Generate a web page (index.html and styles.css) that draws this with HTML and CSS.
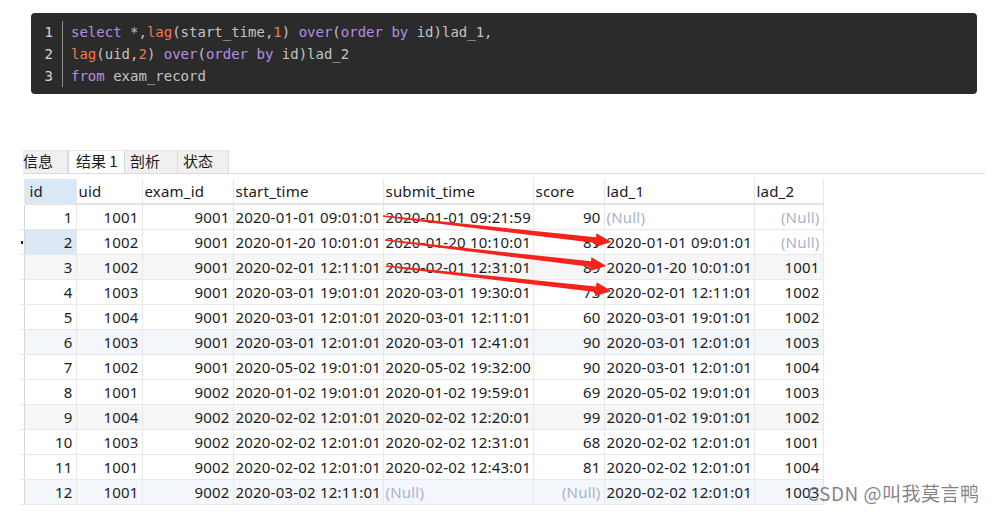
FILE: index.html
```html
<!DOCTYPE html>
<html lang="zh">
<head>
<meta charset="utf-8">
<title>lag</title>
<link rel="stylesheet" href="styles.css">
</head>
<body>
<div class="code">
  <div class="gutter"><div>1</div><div>2</div><div>3</div></div>
  <div class="lines">
    <div class="ln"><span class="kw">select</span> *,<span class="fn">lag</span>(start_time,<span class="num">1</span>) <span class="kw">over</span>(<span class="kw">order</span> <span class="kw">by</span> id)lad_1,</div>
    <div class="ln"><span class="fn">lag</span>(uid,<span class="num">2</span>) <span class="kw">over</span>(<span class="kw">order</span> <span class="kw">by</span> id)lad_2</div>
    <div class="ln"><span class="kw">from</span> exam_record</div>
  </div>
</div>

<div class="result">
  <div class="tabs">
    <div class="tab tab-first">信息</div>
    <div class="tab active">结果 1</div>
    <div class="tab">剖析</div>
    <div class="tab">状态</div>
  </div>
  <table class="grid">
    <colgroup>
      <col class="c-stub"><col class="c-id"><col class="c-uid"><col class="c-exam"><col class="c-dt"><col class="c-dt"><col class="c-score"><col class="c-dt"><col class="c-lad2">
    </colgroup>
    <thead>
      <tr><th class="stub"></th><th class="hid">id</th><th>uid</th><th>exam_id</th><th>start_time</th><th>submit_time</th><th>score</th><th>lad_1</th><th>lad_2</th></tr>
    </thead>
    <tbody>
      <tr><td class="stub"></td><td class="r">1</td><td class="r">1001</td><td class="r">9001</td><td>2020-01-01 09:01:01</td><td>2020-01-01 09:21:59</td><td class="r">90</td><td class="null">(Null)</td><td class="r null">(Null)</td></tr>
      <tr><td class="stub"><span class="mark"></span></td><td class="r cur">2</td><td class="r">1002</td><td class="r">9001</td><td>2020-01-20 10:01:01</td><td>2020-01-20 10:10:01</td><td class="r">89</td><td>2020-01-01 09:01:01</td><td class="r null">(Null)</td></tr>
      <tr class="alt"><td class="stub"></td><td class="r">3</td><td class="r">1002</td><td class="r">9001</td><td>2020-02-01 12:11:01</td><td>2020-02-01 12:31:01</td><td class="r">89</td><td>2020-01-20 10:01:01</td><td class="r">1001</td></tr>
      <tr><td class="stub"></td><td class="r">4</td><td class="r">1003</td><td class="r">9001</td><td>2020-03-01 19:01:01</td><td>2020-03-01 19:30:01</td><td class="r">73</td><td>2020-02-01 12:11:01</td><td class="r">1002</td></tr>
      <tr><td class="stub"></td><td class="r">5</td><td class="r">1004</td><td class="r">9001</td><td>2020-03-01 12:01:01</td><td>2020-03-01 12:11:01</td><td class="r">60</td><td>2020-03-01 19:01:01</td><td class="r">1002</td></tr>
      <tr class="tint"><td class="stub"></td><td class="r">6</td><td class="r">1003</td><td class="r">9001</td><td>2020-03-01 12:01:01</td><td>2020-03-01 12:41:01</td><td class="r">90</td><td>2020-03-01 12:01:01</td><td class="r">1003</td></tr>
      <tr><td class="stub"></td><td class="r">7</td><td class="r">1002</td><td class="r">9001</td><td>2020-05-02 19:01:01</td><td>2020-05-02 19:32:00</td><td class="r">90</td><td>2020-03-01 12:01:01</td><td class="r">1004</td></tr>
      <tr><td class="stub"></td><td class="r">8</td><td class="r">1001</td><td class="r">9002</td><td>2020-01-02 19:01:01</td><td>2020-01-02 19:59:01</td><td class="r">69</td><td>2020-05-02 19:01:01</td><td class="r">1003</td></tr>
      <tr class="alt"><td class="stub"></td><td class="r">9</td><td class="r">1004</td><td class="r">9002</td><td>2020-02-02 12:01:01</td><td>2020-02-02 12:20:01</td><td class="r">99</td><td>2020-01-02 19:01:01</td><td class="r">1002</td></tr>
      <tr><td class="stub"></td><td class="r">10</td><td class="r">1003</td><td class="r">9002</td><td>2020-02-02 12:01:01</td><td>2020-02-02 12:31:01</td><td class="r">68</td><td>2020-02-02 12:01:01</td><td class="r">1001</td></tr>
      <tr><td class="stub"></td><td class="r">11</td><td class="r">1001</td><td class="r">9002</td><td>2020-02-02 12:01:01</td><td>2020-02-02 12:43:01</td><td class="r">81</td><td>2020-02-02 12:01:01</td><td class="r">1004</td></tr>
      <tr class="tint"><td class="stub"></td><td class="r">12</td><td class="r">1001</td><td class="r">9002</td><td>2020-03-02 12:11:01</td><td class="null">(Null)</td><td class="r null">(Null)</td><td>2020-02-02 12:01:01</td><td class="r">1003</td></tr>
    </tbody>
  </table>
</div>

<svg class="arrows" width="993" height="514" viewBox="0 0 993 514" xmlns="http://www.w3.org/2000/svg">
  <g fill="#f5231c">
    <polygon transform="translate(383 216) rotate(6.48)" points="0,-0.7 214,-2.8 214,-7 230,0 214,7 214,2.8 0,0.7"/>
    <polygon transform="translate(385 240) rotate(6.68)" points="0,-0.7 207,-2.8 207,-7 223,0 207,7 207,2.8 0,0.7"/>
    <polygon transform="translate(386 266) rotate(6.31)" points="0,-0.7 211,-2.8 211,-7 227,0 211,7 211,2.8 0,0.7"/>
  </g>
</svg>

<div class="watermark">CSDN @叫我莫言鸭</div>
</body>
</html>
```

FILE: styles.css
```css
html, body {
  margin: 0;
  padding: 0;
}
body {
  position: relative;
  width: 993px;
  height: 514px;
  overflow: hidden;
  background: #ffffff;
  font-family: "Noto Sans", "Noto Sans CJK SC", sans-serif;
  color: #1c1c1c;
}

/* code block */
.code {
  margin: 13px 0 0 31px;
  width: 946px;
  height: 81px;
  box-sizing: border-box;
  padding-top: 8px;
  border-radius: 4px;
  background: #2b2b2b;
  display: flex;
  align-items: flex-start;
  font-family: "DejaVu Sans Mono", "Liberation Mono", monospace;
  font-size: 14px;
  line-height: 22px;
  color: #c3c3c3;
}
.gutter {
  width: 32px;
  box-sizing: border-box;
  padding-right: 9px;
  text-align: right;
  color: #d4d4d4;
  border-right: 1px solid #8c8c8c;
}
.lines {
  padding-left: 8px;
}
.ln {
  white-space: pre;
  height: 22px;
}
.kw { color: #b88ee4; }
.fn { color: #f07a4a; }
.num { color: #f07a4a; }

/* result area */
.result {
  margin-top: 56px;
}
.tabs {
  display: flex;
  margin-left: 23px;
  width: 962px;
  height: 23px;
  border-bottom: 1px solid #dcdcdc;
  font-family: "Noto Sans CJK SC", sans-serif;
  font-size: 15px;
  line-height: 20px;
}
.tab {
  box-sizing: border-box;
  height: 23px;
  padding-left: 5px;
  background: #f0f0f0;
  border-right: 1px solid #dadada;
  border-top: 1px solid #e6e6e6;
  color: #1a1a1a;
}
.tab-first {
  width: 45px;
  padding-left: 0;
}
.tab.active {
  width: 57px;
  padding-left: 7px;
  background: #ffffff;
  border-left: 1px solid #dadada;
}
.tab:nth-child(3) { width: 53px; }
.tab:nth-child(4) { width: 51px; }

.grid {
  margin: 5px 0 0 20px;
  border-collapse: collapse;
  table-layout: fixed;
  width: 803px;
  font-size: 15px;
  letter-spacing: 0.2px;
}
.c-stub { width: 4px; }
.c-id { width: 52px; }
.c-uid { width: 66px; }
.c-exam { width: 91px; }
.c-dt { width: 150px; }
.c-score { width: 71px; }
.c-lad2 { width: 69px; }

.grid th, .grid td {
  padding: 0 0 0 2px;
  height: 24px;
  line-height: 24px;
  border: 1px solid #e8e8e8;
  white-space: nowrap;
  overflow: hidden;
  text-align: left;
  font-weight: normal;
}
.grid th {
  border-top: none;
  border-bottom: 2px solid #e4e4e4;
  color: #1a1a1a;
}
.grid th.hid {
  background: #d9e8f7;
  padding-left: 5px;
}
.grid th.stub {
  border: none;
  border-bottom: 2px solid #ffffff;
}
.grid td.stub {
  border-left: none;
  padding: 0;
  position: relative;
  border-right: 1px solid #d6d6d6;
}
.mark {
  position: absolute;
  left: 1px;
  top: 11px;
  width: 2px;
  height: 3px;
  background: #222;
}
.grid td.r {
  text-align: right;
  padding: 0 3px 0 0;
}
.grid td.cur {
  background: #dbe8f5;
}
.grid td.null {
  color: #aab3c8;
}
.grid tr.alt td { background: #f6f6f6; }
.grid tr.tint td { background: #f3f7fc; }
.grid tr td.stub { background: #ffffff; }

.arrows {
  position: absolute;
  left: 0;
  top: 0;
  pointer-events: none;
}

.watermark {
  position: absolute;
  left: 807px;
  top: 479px;
  font-family: "Noto Sans CJK SC", sans-serif;
  font-size: 19px;
  color: rgba(110, 110, 110, 0.85);
  letter-spacing: 0.5px;
}
```
